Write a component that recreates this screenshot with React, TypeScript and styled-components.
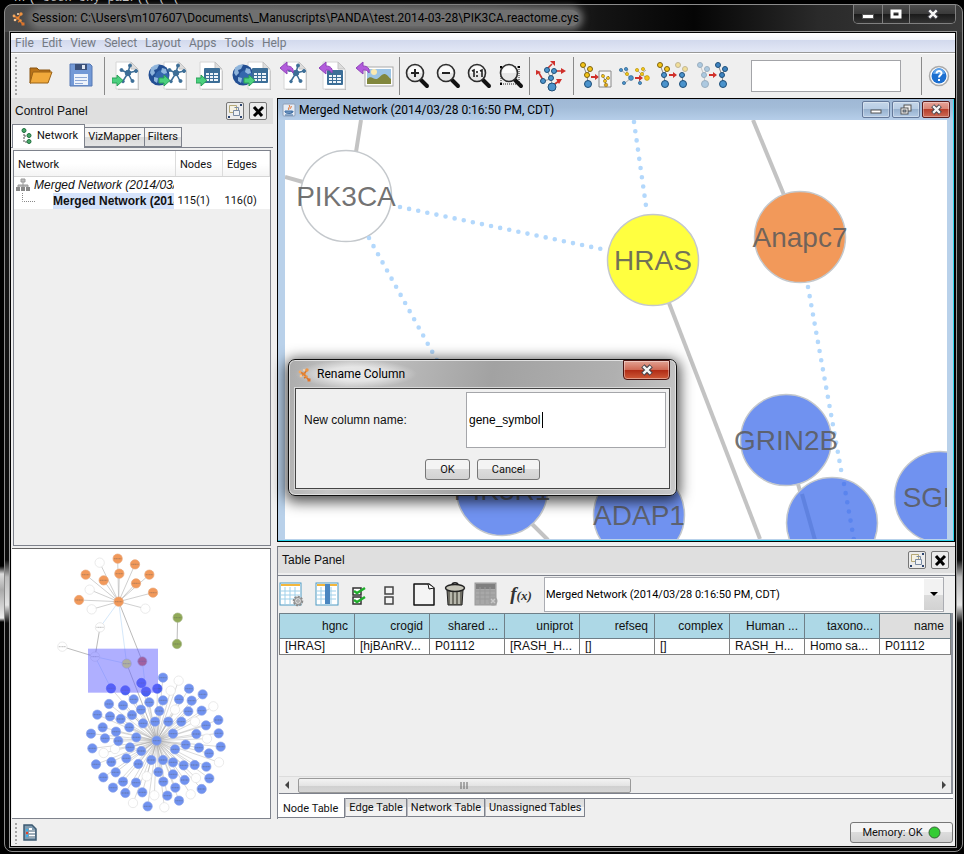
import React from 'react';
import styled, { createGlobalStyle, css } from 'styled-components';

const ui = 'Roboto, "Noto Sans", sans-serif';
const arial = '"Liberation Sans", Arial, sans-serif';

const Global = createGlobalStyle`
  *, *::before, *::after { box-sizing: border-box; }
  body { margin: 0; background: #000; color: #111; font: 11px/14px ${ui}; }
  button, input, select { font: inherit; color: inherit; margin: 0; }
  svg { display: block; flex: none; }
`;

const Desktop = styled.div`
  position: relative;
  display: flex;
  min-height: 100vh;
  padding: 4px 1px 2px 4px;
  background: linear-gradient(#000 566px, #ddd 574px, #aaa 590px, #eee 618px, #000 622px) 0 0 / 4px 100% no-repeat #000;
`;
const Backdrop = styled.div`
  position: absolute;
  top: 0;
  left: 14px;
  height: 4px;
  overflow: hidden;
  display: flex;
  align-items: flex-end;
  color: #c8c8c8;
  font: 12px/12px "Liberation Mono", monospace;
`;
const Window = styled.div`
  position: relative;
  flex: 1;
  min-width: 0;
  display: flex;
  flex-direction: column;
  padding: 0 4px 4px;
  border: 1px solid #8b8b8b;
  border-radius: 8px;
  background:
    linear-gradient(90deg, #4a4a4a, #505050 25%, #3c3c3c 50%, #141414 62%, #050505 72%, #2a2a2a 85%, #3b3b3b) 0 0 / 100% 27px no-repeat,
    linear-gradient(#3a3a3a, #191919 180px, #0c0c0c 555px, #bbb 572px, #e4e4e4 600px, #0c0c0c 618px, #050505);
`;
const TitleBar = styled.header`
  display: flex;
  align-items: flex-start;
  justify-content: space-between;
  height: 26px;
`;
const TitleText = styled.div`
  display: flex;
  align-items: center;
  gap: 6px;
  padding: 0 16px 0 2px;
  height: 26px;
  font: 12px/16px ${ui};
  color: #000;
  white-space: nowrap;
`;
const TitleGlow = styled.span`
  border-radius: 8px;
  background: #707070;
  box-shadow: 0 0 7px 4px #707070;
`;
const CaptionGroup = styled.div`
  display: flex;
  margin-right: 2px;
  height: 19px;
  border: 1px solid #808080;
  border-top: 0;
  border-radius: 0 0 5px 5px;
  overflow: hidden;
`;
const CaptionButton = styled.button<{ $w: number }>`
  width: ${p => p.$w}px;
  padding: 0;
  display: grid;
  place-items: center;
  border: 0;
  background: linear-gradient(#4d4d4d, #3a3a3a 50%, #1a1a1a 50%, #333);
  & + & { border-left: 1px solid #808080; }
`;
const Client = styled.div`
  flex: 1;
  display: flex;
  flex-direction: column;
  background: #efefef;
  border: 1px solid #000;
  outline: 1px solid #999;
  margin: 1px 2px 0 1px;
`;
const MenuBar = styled.nav`
  display: flex;
  gap: 8px;
  height: 20px;
  padding-left: 4px;
  background: linear-gradient(#fff, #f3f5fb 7px, #d2d9ed 7px, #e3e8f6);
  border-bottom: 1px solid #989898;
`;
const MenuItem = styled.button`
  border: 0;
  padding: 0;
  background: none;
  color: #747a83;
  font-size: 12px;
  line-height: 20px;
`;
const ToolBar = styled.div`
  display: flex;
  align-items: center;
  height: 45px;
  padding: 0 3px 0 2px;
  border-top: 1px solid #fff;
`;
const Grip = styled.div<{ $h: number }>`
  width: 8px;
  height: ${p => p.$h}px;
  background: radial-gradient(circle, #a5a5a5 1px, transparent 1px) 1px 0 / 4px 4px repeat-y;
`;
const ToolButton = styled.button<{ $w: number }>`
  width: ${p => p.$w}px;
  height: 40px;
  flex: none;
  padding: 0;
  border: 0;
  background: none;
  display: grid;
  place-items: center;
`;
const Separator = styled.div<{ $w: number }>`
  flex: none;
  width: ${p => p.$w}px;
  height: 38px;
  background: linear-gradient(#8a8a8a, #8a8a8a) center / 1px 100% no-repeat;
`;
const Search = styled.input`
  width: 150px;
  height: 32px;
  margin: 0 auto 0 18px;
  border: 1px solid #a3a4a8;
  background: #fff;
`;
const Main = styled.main`
  flex: 1;
  display: grid;
  grid-template-columns: 262px minmax(0, 1fr);
  column-gap: 4px;
`;
const Column = styled.div`
  display: flex;
  flex-direction: column;
  min-width: 0;
`;
const PanelHeader = styled.div`
  display: flex;
  align-items: center;
  gap: 5px;
  height: 26px;
  flex: none;
  padding: 0 6px 0 4px;
  background: #dfdfdf;
  font: 12px/16px ${arial};
`;
const PanelTitle = styled.h2`
  flex: 1;
  margin: 0;
  font: inherit;
`;
const SquareButton = styled.button`
  width: 18px;
  height: 18px;
  padding: 0;
  display: grid;
  place-items: center;
  border: 1px solid #777;
  border-radius: 2px;
  background: #ececec;
`;
const Tabs = styled.div`
  display: flex;
  align-items: flex-end;
  height: 24px;
  padding-left: 1px;
  border-bottom: 1px solid #7e828c;
`;
const SideTab = styled.button<{ $on?: boolean }>`
  display: flex;
  align-items: center;
  gap: 5px;
  height: 20px;
  padding: 0 3px;
  border: 1px solid #7e828c;
  border-left-width: 0;
  background: linear-gradient(#f4f4f4 50%, #dadada 50%, #e4e4e4);
  ${p => p.$on && css`
    height: 24px;
    margin-bottom: -1px;
    padding: 0 6px 2px 8px;
    background: #fff;
    border-bottom: 0;
    border-left-width: 1px;
  `}
`;
const TreePane = styled.div`
  flex: 1;
  margin: 2px 2px 0 2px;
  border: 1px solid #7e828c;
`;
const TreeTable = styled.table`
  width: 100%;
  table-layout: fixed;
  border-collapse: collapse;
  background: #fff;
`;
const TreeHead = styled.th`
  height: 25px;
  padding: 3px 4px 0;
  text-align: left;
  font-weight: 400;
  border-right: 1px solid #dcdcdc;
  border-bottom: 1px solid #d5d5d5;
  background: linear-gradient(#fff 50%, #f4f4f4);
`;
const TreeCell = styled.td`
  height: 16px;
  padding: 0 2px;
  white-space: nowrap;
  overflow: hidden;
`;
const TreeLabel = styled.div<{ $kind: 'root' | 'leaf' }>`
  display: flex;
  gap: ${p => (p.$kind === 'root' ? 4 : 18)}px;
  align-items: center;
  overflow: hidden;
  font: ${p => (p.$kind === 'root' ? 'italic' : 'bold')} 12px/16px ${arial};
`;
const LeafText = styled.span`
  background: #d5e3fb;
`;
const OverviewPane = styled.div`
  height: 271px;
  flex: none;
  margin: 2px 2px 0 1px;
  background: #fff;
  border: 1px solid #7e828c;
  border-left: 0;
  border-top: 1px solid #666;
  svg { width: 100%; height: 100%; }
`;
const InnerFrame = styled.section`
  flex: 1;
  display: flex;
  flex-direction: column;
  border: 1px solid #000;
  background: #b9d1ea;
  box-shadow: inset -1px -1px 0 #29d3ea;
  padding-bottom: 2px;
`;
const InnerTitle = styled.div`
  display: flex;
  align-items: center;
  gap: 3px;
  height: 21px;
  margin-right: 1px;
  padding: 0 3px 0 4px;
  background: linear-gradient(#9fb8d5, #a3bcd8 40%, #b6cee9);
  color: #000;
  font-size: 12px;
`;
const FrameButtons = styled.div`
  display: flex;
  gap: 2px;
`;
const FrameButton = styled.button<{ $close?: boolean }>`
  width: 28px;
  height: 17px;
  padding: 0;
  display: grid;
  place-items: center;
  border: 1px solid ${p => (p.$close ? '#5c1d1d' : '#65799a')};
  border-radius: 2px;
  background: ${p => p.$close
    ? 'linear-gradient(#e5a398, #d98373 50%, #b8402c 50%, #cc6a55)'
    : 'linear-gradient(#c5d6e9, #b6cbe3 50%, #98b2cf 50%, #b3cae4)'};
  box-shadow: inset 0 0 0 1px #ffffff55;
`;
const Canvas = styled.div`
  flex: 1;
  min-height: 0;
  margin: 0 7px;
  background: #fff;
  svg { width: 100%; height: 100%; }
`;
const TablePanel = styled.section`
  flex: none;
  margin-top: 4px;
  height: 273px;
  display: flex;
  flex-direction: column;
  border-top: 1px solid #666;
  border-left: 1px solid #7e828c;
`;
const TableTools = styled.div`
  display: flex;
  align-items: center;
  height: 38px;
  margin-top: 2px;
  border-top: 1px solid #7e828c;
`;
const Combo = styled.div`
  flex: 1;
  position: relative;
  height: 35px;
  margin: 0 11px 0 3px;
  border: 1px solid #aaacb2;
  background: #fff;
`;
const ComboSelect = styled.select`
  appearance: none;
  width: 100%;
  height: 33px;
  padding: 0 24px 0 1px;
  border: 0;
  background: transparent;
  color: #000;
`;
const ComboArrow = styled.span`
  position: absolute;
  top: 1px;
  right: 0;
  bottom: 1px;
  width: 19px;
  display: grid;
  place-items: center;
  pointer-events: none;
  background: linear-gradient(#f2f2f2 50%, #dcdcdc 50%, #d2d2d2);
`;
const Sheet = styled.div`
  flex: 1;
  display: flex;
  flex-direction: column;
  margin: 0 2px 0 1px;
  border-right: 2px solid #8b8f98;
  border-bottom: 1px solid #7e828c;
  background: #efefef;
`;
const DataTable = styled.table`
  width: 100%;
  table-layout: fixed;
  border-collapse: collapse;
  font: 12px/15px ${arial};
`;
const DataHead = styled.th<{ $plain?: boolean }>`
  height: 25px;
  padding: 0 6px 0 2px;
  text-align: right;
  font-weight: 400;
  white-space: nowrap;
  overflow: hidden;
  border: 1px solid #6f7f88;
  background: ${p => (p.$plain ? '#dedede' : '#add8e6')};
`;
const DataCell = styled.td`
  height: 16px;
  padding: 0 5px;
  white-space: nowrap;
  overflow: hidden;
  border: 1px solid #7e7e7e;
  background: #fff;
`;
const ScrollBar = styled.div`
  display: flex;
  justify-content: space-between;
  align-items: center;
  height: 17px;
  margin-top: auto;
  padding: 0 5px 0 6px;
  border-top: 1px solid #dcdcdc;
  background: #ececec;
`;
const Thumb = styled.div`
  width: 333px;
  height: 15px;
  margin: 0 auto 0 8px;
  display: grid;
  place-items: center;
  border: 1px solid #9a9a9a;
  border-radius: 2px;
  background: linear-gradient(#f3f3f3, #e4e4e4 50%, #cfcfcf 50%, #d6d6d6);
`;
const BottomTabs = styled.div`
  display: flex;
  height: 25px;
  align-items: flex-start;
  margin-right: 2px;
  background: linear-gradient(#fff, #fff) 0 0 / 100% 4px no-repeat;
`;
const BottomRule = styled.div`
  flex: 1;
  height: 1px;
  margin-top: 4px;
  background: #7e828c;
`;
const BottomTab = styled.button<{ $on?: boolean }>`
  height: 19px;
  margin-top: 4px;
  padding: 0 3px;
  white-space: nowrap;
  border: 1px solid #7e828c;
  border-left: 1px solid #b7b9bf;
  background: linear-gradient(#dcdcdc, #e4e4e4 50%, #f3f3f3 50%);
  line-height: 17px;
  ${p => p.$on && css`
    height: 20px;
    padding: 2px 6px 0 5px;
    border-top: 0;
    border-left: 0;
    background: #fff;
  `}
`;
const StatusBar = styled.footer`
  display: flex;
  align-items: center;
  height: 27px;
  padding: 0 2px 0 2px;
`;
const MemoryButton = styled.button`
  width: 103px;
  height: 21px;
  margin-left: auto;
  padding: 0;
  display: flex;
  align-items: center;
  justify-content: center;
  gap: 5px;
  border: 1px solid #777;
  border-radius: 3px;
  background: linear-gradient(#f4f4f4 50%, #dcdcdc 50%, #cfcfcf);
`;
const Dialog = styled.div`
  position: absolute;
  left: 288px;
  top: 359px;
  width: 389px;
  padding: 0 6px 6px;
  border: 1px solid #111;
  border-radius: 7px;
  background: linear-gradient(100deg, #ababab, #c6c6c6 15%, #a2a2a2 50%, #b0b0b0 80%, #c9c9c9);
  box-shadow: inset 0 0 0 1px #e0e0e0, 0 3px 14px 3px #000000b0;
`;
const DialogTitle = styled.div`
  display: flex;
  align-items: flex-start;
  justify-content: space-between;
  height: 28px;
`;
const DialogName = styled.div`
  display: flex;
  align-items: center;
  gap: 5px;
  height: 28px;
  padding: 0 12px 0 2px;
  font-size: 12px;
  color: #000;
  background: radial-gradient(ellipse closest-side, #ffffff90 50%, #ffffff00);
`;
const DialogClose = styled.button`
  width: 47px;
  height: 20px;
  padding: 0;
  display: grid;
  place-items: center;
  border: 1px solid #4b1512;
  border-radius: 0 0 4px 4px;
  background: linear-gradient(#e2a293, #cf6a55 48%, #b02a14 50%, #cf5a38);
  box-shadow: inset 0 0 0 1px #ffffff66;
`;
const DialogBody = styled.form`
  border: 1px solid #444;
  background: #f0f0f0;
  outline: 1px solid #d8d8d8;
  padding: 3px 3px 8px 8px;
`;
const Field = styled.div`
  display: flex;
  align-items: center;
  justify-content: space-between;
  font: 12px/15px ${arial};
`;
const NameBox = styled.span`
  position: relative;
`;
const NameInput = styled.input`
  width: 200px;
  height: 56px;
  padding: 0 2px;
  border: 1px solid #a5a6aa;
  background: #fff;
  color: #000;
`;
const Caret = styled.span`
  position: absolute;
  left: 76px;
  top: 20px;
  width: 1px;
  height: 16px;
  background: #000;
`;
const Actions = styled.div`
  display: flex;
  justify-content: center;
  gap: 7px;
  margin-top: 11px;
  padding-right: 5px;
`;
const ActionButton = styled.button<{ $w: number }>`
  width: ${p => p.$w}px;
  height: 21px;
  padding: 0;
  border: 1px solid #777;
  border-radius: 3px;
  background: linear-gradient(#f4f4f4 50%, #dcdcdc 50%, #d2d2d2);
`;

/* ---------- icons ---------- */

const AppIcon = () => (
  <svg width="15" height="15" viewBox="0 0 15 15">
    <path d="M7 7 3 5M7 7l3-4M7 7l2 3 3 3M7 7l-3 2M7 11l2-1" stroke="#d9762c" strokeWidth="1.400" fill="none" />
    <circle cx="7" cy="7" r="1.600" fill="#e8842f" /><circle cx="3" cy="5" r="1.400" fill="#f6a95e" /><circle cx="10" cy="3" r="1.700" fill="#f09440" /><circle cx="4" cy="9" r="1.300" fill="#ffc890" /><circle cx="7" cy="3" r="1" fill="#ffd9ad" /><circle cx="9.500" cy="9.500" r="1.200" fill="#f09440" /><rect x="10.500" y="11.500" width="3" height="3" fill="#e0742a" />
  </svg>
);
const JavaIcon = () => (
  <svg width="14" height="14" viewBox="0 0 14 14">
    <rect x="1" y="1" width="12" height="12" rx="1" fill="#e6ecf5" stroke="#8fa0b8" />
    <path d="M7 2c2 2-2 3 0 5M9 3c1 1-1 2-1 3" stroke="#e0661b" fill="none" />
    <path d="M3 8h7v1c0 2-6 2-7 0zM10 8c2 0 1 2-1 2M3 12h8" stroke="#3f6ea3" fill="#6f95c0" />
  </svg>
);
const CloseX = ({ s = 13, dark }: { s?: number; dark?: boolean }) => (
  <svg width={s} height={s} viewBox="0 0 13 13">
    {!dark && <path d="M2 2l9 9M11 2l-9 9" stroke="#44444c" strokeWidth="5" />}
    <path d={dark ? 'M2 2l8 9M11 2l-9 9' : 'M2.500 2.500l8 8M10.500 2.500l-8 8'} stroke={dark ? '#000' : '#f5f5f5'} strokeWidth={dark ? 3 : 2.600} />
  </svg>
);
const FloatIcon = () => (
  <svg width="16" height="16" viewBox="0 0 16 16">
    <path d="M2.500 2.500h7v7h-7z" fill="#f5f2e4" stroke="#b5a877" />
    <path d="M6.500 7.500h6v5h-6z" fill="#eef1f5" stroke="#7a8ba3" />
    <path d="M7.500 4.500h4v3" fill="none" stroke="#7a8ba3" />
    <path d="M13 1h2v2h-2zM1 13h2v2H1zM13 13h2v2h-2z" fill="#2c4470" />
  </svg>
);
const Page = ({ x }: { x: number }) => (
  <g transform={`translate(${x} 2)`}>
    <path d="M1 1h14l7 7v19H1z" fill="#bbb" transform="translate(1 1)" />
    <path d="M0 0h15l7 7v20H0z" fill="#fff" stroke="#d6d6d6" />
    <path d="M15 0v7h7z" fill="#dcdcdc" stroke="#c4c4c4" />
  </g>
);
const Net = ({ x }: { x: number }) => (
  <g transform={`translate(${x} 3)`} fill="#3c6e97" stroke="#3c6e97">
    <path d="M9 10 2 7M9 10l2-8M9 10l8-2M9 10l4 8M9 10l-5 8" strokeWidth="1.500" />
    <circle cx="9" cy="10" r="2.800" /><circle cx="2.500" cy="7" r="1.500" /><circle cx="11" cy="2.500" r="1.500" /><circle cx="17" cy="8" r="1.500" /><circle cx="13.500" cy="18" r="1.500" /><circle cx="4" cy="18.500" r="1.300" />
  </g>
);
const Sheet16 = ({ x, y = 10 }: { x: number; y?: number }) => (
  <g transform={`translate(${x} ${y})`}>
    <rect width="16" height="15" rx="1" fill="#3c6e97" />
    <path d="M2 5h3v2H2zM6 5h3v2H6zM10 5h4v2h-4zM2 8h3v2H2zM6 8h3v2H6zM10 8h4v2h-4zM2 11h3v2H2zM6 11h3v2H6zM10 11h4v2h-4z" fill="#eef4f9" />
  </g>
);
const InArrow = ({ x, y = 15 }: { x: number; y?: number }) => (
  <path transform={`translate(${x} ${y})`} d="M0 3h5V0l6 5.500-6 5.500V8H0z" fill="#4bd07e" stroke="#2a9f58" />
);
const OutArrow = () => (
  <path d="M0 8 7 2v4c5 0 7 3 6 7-2-3-3-3-6-3v4z" fill="#b25bdc" stroke="#8f45b8" />
);
const Globe = () => (
  <g>
    <circle cx="11" cy="15" r="10.500" fill="#234f93" />
    <circle cx="14" cy="17" r="7" fill="#3f78be" opacity=".6" />
    <path d="M3 8c3-4 6-4 8-3l-2 4-3 1 1 3-3 3-2-3zM14 8l4 1 1 4-3 1-3-2zM6 17l4 1-1 5-3-2z" fill="#a9cdee" opacity=".8" />
  </g>
);
const Lens = ({ children, fit }: { children?: React.ReactNode; fit?: boolean }) => (
  <svg width="26" height="28" viewBox="0 0 26 28">
    {fit && <path d="M3 5h18v17H3z" fill="none" stroke="#222" strokeDasharray="1 1" />}
    {fit && <path d="M2 4h2v2H2zM20 4h2v2h-2zM2 21h2v2H2z" fill="#000" />}
    <path d="m16 17 7 7" stroke="#111" strokeWidth="4" strokeLinecap="round" />
    <circle cx="11" cy="11" r="8.500" fill="#e7e7e7" stroke="#2d2d2d" strokeWidth="1.600" />
    <path d="M4 11a7 7 0 0 1 14 0z" fill="#fafafa" />
    {children}
  </svg>
);
const Ball = ({ x, y, r = 3, c = '#4b93cc' }: { x: number; y: number; r?: number; c?: string }) => (
  <circle cx={x} cy={y} r={r} fill={c} stroke={c === '#f5c518' ? '#7d6310' : '#1f4f78'} />
);
const gold = '#f5c518';
const Arrow = ({ x, y }: { x: number; y: number }) => (
  <path transform={`translate(${x} ${y})`} d="M0-1h4v-2l4 3-4 3V1H0z" fill="#d0302b" />
);
const Branch = ({ x, a, b, faded }: { x: number; a: string; b: string; faded?: boolean }) => (
  <g transform={`translate(${x} 0)`} opacity={faded ? 0.4 : 1}>
    <path d="M3 5l4 10 3-6M7 15l1 9" stroke="#888" fill="none" />
    <Ball x={3} y={5} r={2.500} c={a} /><Ball x={10} y={9} r={2.500} c={a} /><Ball x={7} y={15} r={2.500} c={b} /><Ball x={8} y={24} r={3.500} />
  </g>
);
const Tiny = ({ x, y, c }: { x: number; y: number; c?: string }) => (
  <g transform={`translate(${x} ${y})`}>
    <path d={c ? 'M2 2l4 4 5-4M6 6l6 4M6 6l-2 9' : 'M1 2l5 4 2-5M6 6l5 4M11 10l-6 5'} stroke="#aaa" fill="none" />
    {(c
      ? [[2, 2, c], [8, 1, c], [7, 6, c], [12, 10, c], [5, 15, '#4b93cc']]
      : [[1, 2, '#4b93cc'], [6, 1, '#4b93cc'], [7, 6, gold], [11, 10, '#4b93cc'], [4, 15, '#4b93cc']]
    ).map(([a, b, f], i) => <circle key={i} cx={a} cy={b} r={i === 3 ? 2.400 : 1.600} fill={`${f}`} stroke={f === gold ? '#b8950c' : '#2b638f'} strokeWidth=".7" />)}
  </g>
);

type Tool = { id: string; w: number; art: React.ReactNode } | { id: string; sep: number };
const art = (w: number, node: React.ReactNode) => <svg width={w} height="32" viewBox={`0 0 ${w} 32`}>{node}</svg>;

const tools: Tool[] = [
  { id: 'Open session', w: 40, art: art(26, <><path d="M2 8h7l2 2h11v3H7L3 23H2z" fill="#b97318" stroke="#8a5510" /><path d="M5 12h19l-4 11H2z" fill="#f0a93b" stroke="#9a6216" /></>) },
  { id: 'Save session', w: 40, art: art(24, <><path d="M1 4h20l2 2v20H1z" fill="#7399d6" stroke="#5679b4" /><path d="M6 4h12v6H6z" fill="#3b5079" /><path d="M13 5h3v4h-3z" fill="#dfe6f2" /><rect x="5" y="14" width="14" height="11" fill="#eef3fb" /><path d="M6 17.500h12M6 20.500h12M6 23.500h8" stroke="#8fa9d6" /></>) },
  { id: 's1', sep: 6 },
  { id: 'Import network', w: 38, art: art(28, <><Page x={4} /><Net x={7} /><InArrow x={0} /></>) },
  { id: 'Import network from web', w: 46, art: art(40, <><Page x={16} /><Globe /><Net x={19} /><InArrow x={11} /></>) },
  { id: 'Import table', w: 38, art: art(28, <><Page x={4} /><Sheet16 x={8} y={8} /><InArrow x={0} /></>) },
  { id: 'Import table from web', w: 46, art: art(40, <><Page x={16} /><Globe /><Sheet16 x={20} y={8} /><InArrow x={12} /></>) },
  { id: 'Export network', w: 38, art: art(28, <><Page x={4} /><Net x={7} /><OutArrow /></>) },
  { id: 'Export table', w: 40, art: art(28, <><Page x={4} /><Sheet16 x={8} /><OutArrow /></>) },
  { id: 'Export image', w: 44, art: art(38, <><rect x="9" y="7" width="28" height="19" fill="#fff" stroke="#aaa" /><rect x="11" y="9" width="24" height="15" fill="#9cc4e4" /><circle cx="18" cy="12" r="3" fill="#fbeab0" /><path d="M11 24v-5c4-4 6 0 9 0s6-6 9-5 4 4 6 5v5z" fill="#81873d" /><OutArrow /></>) },
  { id: 's2', sep: 4 },
  { id: 'Zoom in', w: 32, art: <Lens><path d="M11 7v8M7 11h8" stroke="#222" strokeWidth="2" /></Lens> },
  { id: 'Zoom out', w: 30, art: <Lens><path d="M7 11h8" stroke="#222" strokeWidth="2" /></Lens> },
  { id: 'Zoom 1:1', w: 32, art: <Lens><path d="M6 9l2-1v7M14 9l2-1v7M11 9v2M11 13v2" stroke="#222" strokeWidth="1.600" fill="none" /></Lens> },
  { id: 'Zoom to fit', w: 32, art: <Lens fit /> },
  { id: 's3', sep: 4 },
  { id: 'Apply layout', w: 40, art: art(34, <>
    <path d="M13 10l4 9M20 11l-3 8M17 19l-8 2M17 19l1 8" stroke="#999" />
    <path d="M13 9l5-5M21 11h7M9 20l-4-7M18 26l7-5" stroke="#c9352e" strokeWidth="1.600" />
    <path d="M16 1h5v5zM27 8l5 3-5 3zM2 15V10l5 2zM22 19h6l-3 5z" fill="#d0302b" />
    <Ball x={13} y={10} r={2.500} /><Ball x={20} y={11} r={2.500} /><Ball x={17} y={18} r={2.500} /><Ball x={9} y={21} r={2.500} /><Ball x={18} y={27} r={4} /></>) },
  { id: 's4', sep: 4 },
  { id: 'New network from selection', w: 42, art: art(32, <><Branch x={0} a={gold} b={gold} /><Arrow x={11} y={17} /><path d="M19 11h12v16H19z" fill="#f7f7f7" stroke="#888" /><g transform="translate(21 13)"><path d="M1 1l3 6 4-4M4 7l1 5" stroke="#888" fill="none" /><circle cx="2" cy="3" r="1.600" fill={gold} stroke="#7d6310" strokeWidth=".5" /><circle cx="7" cy="5" r="1.600" fill={gold} stroke="#7d6310" strokeWidth=".5" /><circle cx="4" cy="8" r="1.600" fill={gold} stroke="#7d6310" strokeWidth=".5" /><circle cx="5" cy="12" r="1.800" fill="#e0a818" stroke="#7d6310" strokeWidth=".5" /></g></>) },
  { id: 'First neighbors', w: 36, art: art(34, <><Tiny x={2} y={8} /><Tiny x={17} y={8} c={gold} /><Arrow x={17} y={18} /></>) },
  { id: 'Hide selected', w: 40, art: art(32, <><Branch x={0} a={gold} b="#4b93cc" /><g opacity=".4"><Ball x={21} y={5} r={2.500} c={gold} /><Ball x={28} y={9} r={2.500} c={gold} /></g><path d="M25 15l1 9" stroke="#888" /><Ball x={25} y={15} r={2.500} /><Ball x={26} y={24} r={3.500} /><Arrow x={12} y={15} /></>) },
  { id: 'Show all', w: 40, art: art(32, <><Branch x={0} a="#4b93cc" b="#4b93cc" faded /><Branch x={18} a="#3d83c0" b="#3d83c0" /><Arrow x={12} y={15} /></>) },
];

const Grid24 = ({ col, gray }: { col?: boolean; gray?: boolean }) => (
  <g>
    <rect x="1" y="2" width={col ? 22 : 21} height="22" fill={gray ? '#a8a8a8' : '#fff'} stroke={gray ? '#999' : '#4f9bc4'} />
    <rect x="2" y="3" width={col ? 20 : 19} height={gray ? 5 : 2} fill={gray ? '#7f7f7f' : '#f2b63c'} />
    <path d="M2 10h19M2 14h19M2 18h19M6 6v17M11 6v17M16 6v17" stroke={gray ? '#999' : '#9fd0ea'} />
    {col && <rect x="10" y="3" width="5" height="20" fill="#4a86c0" />}
  </g>
);
const Gear = ({ c = '#8c8c8c' }) => <g><circle cx="19" cy="20" r="4" fill="#ddd" stroke={c} strokeWidth="2.500" strokeDasharray="2 1" /><circle cx="19" cy="20" r="3.500" fill="#d8d8d8" stroke={c} /><circle cx="19" cy="20" r="1.200" fill="#fff" stroke={c} /></g>;
const cell = (w: number, node: React.ReactNode) => <svg width={w} height="28" viewBox={`0 0 ${w} 28`}>{node}</svg>;

const tableTools = [
  { id: 'Table options', w: 27, art: cell(26, <><Grid24 /><Gear /></>) },
  { id: 'Show columns', w: 44, art: cell(24, <Grid24 col />) },
  { id: 'Select all columns', w: 20, art: cell(16, <><path d="M2 7h8v7H2zM2 16h8v7H2z" fill="#fff" stroke="#333" strokeWidth="1.500" /><path d="M3 10l3 2 8-5M3 19l3 2 8-5" stroke="#1fae2b" strokeWidth="2.500" fill="none" /></>) },
  { id: 'Clear columns', w: 40, art: cell(12, <path d="M2 6h8v7H2zM2 16h8v7H2z" fill="#f3f3f3" stroke="#444" strokeWidth="1.500" />) },
  { id: 'Create column', w: 30, art: cell(22, <><path d="M1 3h15l5 4v17H1z" fill="#f4f4f4" stroke="#111" strokeWidth="1.500" strokeLinejoin="round" /><path d="M15 3l1 5 5-1" fill="#fff" stroke="#111" /></>) },
  { id: 'Delete columns', w: 32, art: cell(22, <><path d="M3 9h16l-1 15H4z" fill="#6f6e64" stroke="#222" /><path d="M7 11v12M11 11v12M15 11v12" stroke="#d0cfc4" strokeWidth="1.500" /><ellipse cx="11" cy="7" rx="9.500" ry="3.500" fill="#c5c4b8" stroke="#222" strokeWidth="1.500" /><path d="M8 4c0-3 6-3 6 0" fill="none" stroke="#222" strokeWidth="1.500" /></>) },
  { id: 'Delete table', w: 30, art: cell(24, <><Grid24 gray /><circle cx="19" cy="20" r="4.500" fill="#a0a0a0" /><path d="M17 18l4 4M21 18l-4 4" stroke="#c8c8c8" strokeWidth="1.500" /></>) },
];
const Fx = styled.button`
  width: 40px;
  padding: 0;
  border: 0;
  background: none;
  color: #333;
  font: italic bold 19px/22px "Liberation Serif", serif;
  small { font-size: 13px; }
`;

/* ---------- network view ---------- */

const blue = '#7092f0';
const nodes = [
  { x: 61, y: 76, label: 'PIK3CA', fill: '#fff' },
  { x: 368, y: 140, label: 'HRAS', fill: '#ffff40' },
  { x: 515, y: 117, label: 'Anapc7', fill: '#f2995a' },
  { x: 501, y: 320, label: 'GRIN2B', fill: blue },
  { x: 547, y: 403, label: '', fill: blue },
  { x: 655, y: 377, label: 'SGK1', fill: blue },
  { x: 354, y: 395, label: 'ADAP1', fill: blue },
  { x: 217, y: 370, label: 'PIK3R1', fill: blue },
];
const solid = ['M76 0l-5 32', 'M0 57l18 5', 'M384 183l91 236', 'M468 0l31 75', 'M513 364l16 56', 'M247 404l16 16'];
const dotted = ['M115 87l206 43', 'M349 2l13 91', 'M84 118l100 180', 'M523 167l34 188'];

const NetworkView = () => (
  <svg role="img" aria-label="Merged network">
    {solid.map(d => <path key={d} d={d} stroke="#c3c3c3" strokeWidth="4" />)}
    {nodes.map(n => <circle key={`${n.x}`} cx={n.x} cy={n.y} r="45.500" fill={n.fill} stroke="#c4c8cc" strokeWidth="1.500" />)}
    {dotted.map(d => <path key={d} d={d} stroke="#b3d8fc" strokeWidth="4.600" strokeLinecap="round" strokeDasharray="0 9.300" />)}
    <path d="M517 374l13 46" stroke="#5f82e0" strokeWidth="4" />
    <path d="M559 364l10 56" stroke="#5a84ee" strokeWidth="4.600" strokeLinecap="round" strokeDasharray="0 9.300" />
    {nodes.map(n => <text key={`t${n.x}`} x={n.x} y={n.y + 10} textAnchor="middle" fontFamily={arial} fontSize="28" fill="#5a5a5a" fillOpacity=".85">{n.label}</text>)}
  </svg>
);

const orangeDots = [[353, 57], [405, 74], [257, 105], [311, 122], [358, 102], [448, 105], [408, 131], [459, 159], [237, 181]];
const hollowTop = [[299, 69], [269, 150], [275, 209], [436, 207]];
const hollow = [[536, 423], [512, 453], [640, 500], [585, 546], [621, 597], [311, 640], [345, 628], [657, 668], [588, 715], [572, 764], [463, 767], [399, 790], [493, 803], [440, 710], [525, 510]];
const blueDots = [[489, 414], [567, 447], [608, 464], [401, 479], [448, 488], [489, 482], [537, 479], [575, 483], [327, 493], [369, 497], [423, 510], [478, 514], [565, 515], [605, 513], [292, 525], [330, 530], [362, 538], [396, 526], [429, 551], [465, 546], [505, 546], [544, 546], [618, 557], [655, 541], [308, 563], [348, 576], [388, 563], [409, 593], [519, 582], [589, 583], [656, 581], [273, 582], [315, 596], [355, 604], [390, 623], [424, 634], [557, 615], [525, 629], [597, 624], [627, 641], [662, 621], [277, 626], [288, 674], [334, 667], [379, 656], [415, 673], [454, 661], [489, 661], [519, 668], [551, 677], [584, 676], [619, 681], [310, 713], [347, 698], [475, 697], [519, 704], [554, 721], [628, 716], [369, 726], [408, 729], [490, 726], [526, 744], [605, 748], [339, 744], [376, 760], [427, 758], [502, 768], [537, 783], [443, 800]];
const inView = [[424, 430], [333, 446], [376, 452], [438, 456], [472, 447]];

const Dots = ({ at, fill, tag = true, line = '#c8c8c8' }: { at: number[][]; fill: string; tag?: boolean; line?: string }) => (
  <>{at.map(([x, y]) => (
    <g key={`${x}-${y}`}>
      <circle cx={x} cy={y} r="14" fill={fill} stroke={line} strokeWidth="2" />
      {tag && <path d={`M${x - 11} ${y}h22`} stroke="#555" strokeOpacity=".3" strokeWidth="4" strokeDasharray="4 1" />}
    </g>
  ))}</>
);
const Overview = () => (
  <svg viewBox="36 28 774 803" preserveAspectRatio="xMinYMin meet" role="img" aria-label="Network overview">
    <g stroke="#bbb" strokeWidth="3" fill="none">
      {[...orangeDots, ...hollowTop].map(([x, y]) => <path key={`${x}-${y}`} d={`M356 186L${x} ${y}`} strokeOpacity=".7" />)}
      <path d="M356 186L427 365M300 263l-15 88L187 321M533 234l-2 79M380 372l90 231" />
      <path d="M356 186l-56 77M356 186l24 186M285 351l95 21M285 351l48 95M427 365l11 91" stroke="#d5e8fa" />
    </g>
    <g stroke="#999" strokeWidth="2" strokeOpacity=".55">
      {[...blueDots, ...inView, ...hollow].map(([x, y]) => <path key={`${x}-${y}`} d={`M470 603L${x} ${y}`} />)}
    </g>
    <Dots at={[...hollowTop, ...hollow]} fill="#fffffff0" tag={false} line="#e0e0e0" />
    <Dots at={[[300, 263], [187, 321], [285, 351]]} fill="#fff" line="#e0e0e0" />
    <Dots at={[...orangeDots, [356, 186]]} fill="#f2995a" line="#e9a678" />
    <Dots at={[[533, 234], [531, 313]]} fill="#91aa58" line="#a5b585" />
    <Dots at={[...blueDots, [470, 603]]} fill={blue} line="#8fa6e8" />
    <Dots at={inView} fill="#4a60f0" line="#4a60f0" />
    <Dots at={[[380, 372]]} fill="#ffff40" />
    <Dots at={[[427, 365]]} fill="#e06040" />
    <rect x="264" y="327" width="210" height="132" fill="#5f5fff" fillOpacity=".5" />
  </svg>
);

const columns = ['hgnc', 'crogid', 'shared ...', 'uniprot', 'refseq', 'complex', 'Human ...', 'taxono...', 'name'];
const row = ['[HRAS]', '[hjBAnRV...', 'P01112', '[RASH_H...', '[]', '[]', 'RASH_H...', 'Homo sa...', 'P01112'];
const networkName = 'Merged Network (2014/03/28 0:16:50 PM, CDT)';

const PanelButtons = () => (
  <>
    <SquareButton aria-label="Float panel"><FloatIcon /></SquareButton>
    <SquareButton aria-label="Close panel"><CloseX dark /></SquareButton>
  </>
);

export default function App() {
  return (
    <Desktop>
      <Global />
      <Backdrop aria-hidden="true">nr( seen shy pair(( ( (</Backdrop>
      <Window>
        <TitleBar>
          <TitleText><AppIcon /><TitleGlow>Session: C:\Users\m107607\Documents\_Manuscripts\PANDA\test.2014-03-28\PIK3CA.reactome.cys</TitleGlow></TitleText>
          <CaptionGroup>
            <CaptionButton $w={28} aria-label="Minimize"><svg width="12" height="12"><rect x=".5" y="6.500" width="11" height="4" fill="#fff" stroke="#555" /></svg></CaptionButton>
            <CaptionButton $w={27} aria-label="Maximize"><svg width="12" height="12"><rect x="2" y="3" width="8" height="6" fill="none" stroke="#fff" strokeWidth="3" /></svg></CaptionButton>
            <CaptionButton $w={46} aria-label="Close"><CloseX s={12} /></CaptionButton>
          </CaptionGroup>
        </TitleBar>
        <Client>
          <MenuBar>
            {['File', 'Edit', 'View', 'Select', 'Layout', 'Apps', 'Tools', 'Help'].map(m => <MenuItem key={m}>{m}</MenuItem>)}
          </MenuBar>
          <ToolBar>
            <Grip $h={40} />
            {tools.map(t => 'sep' in t
              ? <Separator key={t.id} $w={t.sep} />
              : <ToolButton key={t.id} $w={t.w} aria-label={t.id}>{t.art}</ToolButton>)}
            <Search aria-label="Search" />
            <Separator $w={8} />
            <ToolButton $w={27} aria-label="Help">
              <svg width="22" height="22" viewBox="0 0 22 22">
                <circle cx="11" cy="11" r="9.500" fill="#fff" stroke="#aaa" strokeWidth="1.500" />
                <circle cx="11" cy="11" r="7.500" fill="#1c6fd0" />
                <path d="M5 9a6 6 0 0 1 12 0z" fill="#5ea2ea" />
                <path d="M8.500 8.500c0-3.500 5.500-3 5 0-.3 1.500-2.500 1.800-2.500 4M11 14v2" stroke="#fff" strokeWidth="2" fill="none" />
              </svg>
            </ToolButton>
          </ToolBar>
          <Main>
            <Column>
              <PanelHeader><PanelTitle>Control Panel</PanelTitle><PanelButtons /></PanelHeader>
              <Tabs role="tablist">
                <SideTab $on role="tab" aria-selected="true">
                  <svg width="11" height="16" viewBox="0 0 11 16"><path d="M3 3v11h5M3 8h5" stroke="#555" fill="none" strokeDasharray="2 1" /><g fill="#48a868" stroke="#1f6f3e"><circle cx="3" cy="2.500" r="2" /><circle cx="8" cy="7.500" r="2" /><circle cx="8" cy="13.500" r="2" /></g></svg>
                  Network
                </SideTab>
                <SideTab role="tab">VizMapper</SideTab>
                <SideTab role="tab">Filters</SideTab>
              </Tabs>
              <TreePane>
                <TreeTable>
                  <colgroup><col /><col width="47" /><col width="47" /></colgroup>
                  <thead><tr><TreeHead>Network</TreeHead><TreeHead>Nodes</TreeHead><TreeHead>Edges</TreeHead></tr></thead>
                  <tbody>
                    <tr>
                      <TreeCell>
                        <TreeLabel $kind="root">
                          <svg width="14" height="13" viewBox="0 0 14 13"><path d="M5 1h4v3H5zM7 4v3M2 9V7h10v2M7 7v2" fill="#bbb" stroke="#999" /><path d="M0 9h4v4H0zM5 9h4v4H5zM10 9h4v4h-4z" fill="#888" /></svg>
                          {networkName}
                        </TreeLabel>
                      </TreeCell>
                      <TreeCell /><TreeCell />
                    </tr>
                    <tr>
                      <TreeCell>
                        <TreeLabel $kind="leaf">
                          <svg width="19" height="16" viewBox="0 0 19 16"><path d="M6.500 0v8.500H19" fill="none" stroke="#888" strokeDasharray="1 1" /></svg>
                          <LeafText>{networkName}</LeafText>
                        </TreeLabel>
                      </TreeCell>
                      <TreeCell>115(1)</TreeCell>
                      <TreeCell>116(0)</TreeCell>
                    </tr>
                  </tbody>
                </TreeTable>
              </TreePane>
              <OverviewPane><Overview /></OverviewPane>
            </Column>
            <Column>
              <InnerFrame>
                <InnerTitle>
                  <JavaIcon /><PanelTitle>{networkName}</PanelTitle>
                  <FrameButtons>
                    <FrameButton aria-label="Minimize view"><svg width="12" height="10"><rect x="1" y="5" width="10" height="3" fill="#fff" stroke="#555" /></svg></FrameButton>
                    <FrameButton aria-label="Restore view"><svg width="14" height="12"><rect x="5" y="1" width="7" height="6" fill="#eee" stroke="#555" /><rect x="2" y="4" width="7" height="6" fill="#fff" stroke="#555" /><rect x="4" y="6" width="3" height="2" fill="#98b2cf" stroke="#555" /></svg></FrameButton>
                    <FrameButton $close aria-label="Close view"><CloseX s={11} /></FrameButton>
                  </FrameButtons>
                </InnerTitle>
                <Canvas><NetworkView /></Canvas>
              </InnerFrame>
              <TablePanel>
                <PanelHeader><PanelTitle>Table Panel</PanelTitle><PanelButtons /></PanelHeader>
                <TableTools>
                  {tableTools.map(t => <ToolButton key={t.id} $w={t.w} aria-label={t.id}>{t.art}</ToolButton>)}
                  <Fx aria-label="Function builder">f<small>(x)</small></Fx>
                  <Combo>
                    <ComboSelect aria-label="Network"><option>{networkName}</option></ComboSelect>
                    <ComboArrow><svg width="8" height="5"><path d="M0 0h8L4 4z" /></svg></ComboArrow>
                  </Combo>
                </TableTools>
                <Sheet>
                  <DataTable>
                    <colgroup>{columns.map(c => <col key={c} width={c === 'name' ? undefined : 75} />)}</colgroup>
                    <thead><tr>{columns.map(c => <DataHead key={c} $plain={c === 'name'}>{c}</DataHead>)}</tr></thead>
                    <tbody><tr>{row.map((c, i) => <DataCell key={columns[i]}>{c}</DataCell>)}</tr></tbody>
                  </DataTable>
                  <ScrollBar>
                    <svg width="5" height="8"><path d="M4 0v8L0 4z" fill="#444" /></svg>
                    <Thumb><svg width="9" height="7"><path d="M1 0v7M4 0v7M7 0v7" stroke="#666" /></svg></Thumb>
                    <svg width="5" height="8"><path d="M1 0v8l4-4z" fill="#444" /></svg>
                  </ScrollBar>
                </Sheet>
                <BottomTabs role="tablist">
                  <BottomTab $on role="tab" aria-selected="true">Node Table</BottomTab>
                  <BottomTab role="tab">Edge Table</BottomTab>
                  <BottomTab role="tab">Network Table</BottomTab>
                  <BottomTab role="tab">Unassigned Tables</BottomTab>
                  <BottomRule />
                </BottomTabs>
              </TablePanel>
            </Column>
          </Main>
          <StatusBar>
            <Grip $h={22} />
            <ToolButton $w={18} aria-label="Task history">
              <svg width="14" height="17" viewBox="0 0 14 17"><path d="M1 1h8l4 4v11H1z" fill="#7f9bb0" stroke="#3c5a72" strokeWidth="1.500" /><path d="M6 4h3v2h3v8H6z" fill="#fff" /><path d="M6 7h6M6 10h6M6 13h6" stroke="#3c5a72" /><path d="M3 5h2v2H3zM3 11h2v2H3z" fill="#3ab0ee" /><path d="M3 8h2v2H3z" fill="#e0402a" /></svg>
            </ToolButton>
            <MemoryButton>Memory: OK<svg width="13" height="13"><circle cx="6.500" cy="6.500" r="5.500" fill="#33cc33" stroke="#386038" /></svg></MemoryButton>
          </StatusBar>
        </Client>
      </Window>
      <Dialog role="dialog" aria-labelledby="rename-title">
        <DialogTitle>
          <DialogName id="rename-title"><AppIcon />Rename Column</DialogName>
          <DialogClose aria-label="Close dialog"><CloseX s={12} /></DialogClose>
        </DialogTitle>
        <DialogBody onSubmit={e => e.preventDefault()}>
          <Field>
            <label htmlFor="column-name">New column name:</label>
            <NameBox><NameInput id="column-name" defaultValue="gene_symbol" /><Caret /></NameBox>
          </Field>
          <Actions>
            <ActionButton $w={45}>OK</ActionButton>
            <ActionButton $w={63} type="button">Cancel</ActionButton>
          </Actions>
        </DialogBody>
      </Dialog>
    </Desktop>
  );
}
